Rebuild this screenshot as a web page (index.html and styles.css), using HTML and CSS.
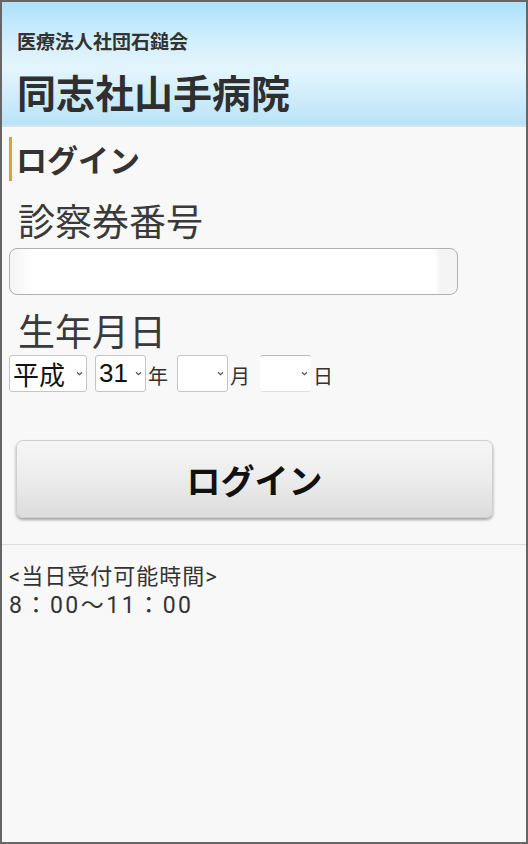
FILE: index.html
```html
<!DOCTYPE html>
<html lang="ja">
<head>
<meta charset="utf-8">
<title>同志社山手病院 ログイン</title>
<link rel="stylesheet" href="styles.css">
</head>
<body>
<div class="page">
  <header class="header">
    <div class="corp">医療法人社団石鎚会</div>
    <h1 class="hospital">同志社山手病院</h1>
  </header>

  <section class="form">
    <h2 class="heading">ログイン</h2>
    <div class="label">診察券番号</div>
    <div class="input-wrap"><input class="text-input" type="text"></div>
    <div class="label label-dob">生年月日</div>
    <div class="dob-row">
      <span class="sel sel-era"><span class="sel-text">平成</span><svg class="chev" viewBox="0 0 8 6" width="7" height="5"><path d="M1 1.5 L4 4.5 L7 1.5" fill="none" stroke="#555" stroke-width="1.4"/></svg></span>
      <span class="sel sel-year"><span class="sel-text">31</span><svg class="chev" viewBox="0 0 8 6" width="7" height="5"><path d="M1 1.5 L4 4.5 L7 1.5" fill="none" stroke="#555" stroke-width="1.4"/></svg></span>
      <span class="unit">年</span>
      <span class="sel sel-empty"><span class="sel-text"></span><svg class="chev" viewBox="0 0 8 6" width="7" height="5"><path d="M1 1.5 L4 4.5 L7 1.5" fill="none" stroke="#555" stroke-width="1.4"/></svg></span>
      <span class="unit">月</span>
      <span class="sel sel-empty sel-day"><span class="sel-text"></span><svg class="chev" viewBox="0 0 8 6" width="7" height="5"><path d="M1 1.5 L4 4.5 L7 1.5" fill="none" stroke="#555" stroke-width="1.4"/></svg></span>
      <span class="unit">日</span>
    </div>
    <button class="login-btn" type="button">ログイン</button>
  </section>

  <hr class="divider">

  <section class="info">
    <div class="info-line">&lt;当日受付可能時間&gt;</div>
    <div class="info-line info-time">8：00～11：00</div>
  </section>
</div>
</body>
</html>
```
FILE: styles.css
```css
html, body {
  margin: 0;
  padding: 0;
}
body {
  font-family: "Noto Sans CJK JP", "Noto Sans", sans-serif;
  color: #333;
  background: #666;
}
.page {
  width: 528px;
  height: 844px;
  box-sizing: border-box;
  border: 2px solid #666;
  background: #f8f8f8;
  overflow: hidden;
}
.header {
  height: 125px;
  box-sizing: border-box;
  padding: 29px 0 0 15px;
  background: linear-gradient(to bottom, #ade1fa 0%, #d6f0fc 35%, #e4f5fd 55%, #c5e8f9 88%, #b8e3f7 100%);
  border-bottom: 2px solid #d2e4ec;
}
.corp {
  font-size: 19px;
  line-height: 19px;
  font-weight: bold;
  color: #333;
}
.hospital {
  margin: 22px 0 0 0;
  font-size: 39px;
  line-height: 39px;
  font-weight: bold;
  color: #2f2f2f;
}
.form {
  padding: 0 7px;
}
.heading {
  margin: 10px 0 0 0;
  height: 44px;
  border-left: 3px solid #d9a33a;
  padding-left: 4px;
  font-size: 31px;
  line-height: 44px;
  font-weight: bold;
  color: #333;
}
.label {
  margin-top: 21px;
  padding-left: 9px;
  font-size: 37px;
  line-height: 36px;
  color: #3a3a3a;
}
.label-dob {
  margin-top: 17px;
}
.input-wrap {
  margin-top: 10px;
}
.text-input {
  display: block;
  width: 449px;
  height: 47px;
  box-sizing: border-box;
  border: 1px solid #b0b0b0;
  border-radius: 8px;
  background: linear-gradient(to right, #f4f4f4 0, #fff 24px, #fff 425px, #f4f4f4 430px);
  margin: 0;
  padding: 0 20px;
}
.dob-row {
  margin-top: 7px;
  display: flex;
  align-items: center;
  height: 37px;
}
.sel {
  position: relative;
  display: flex;
  align-items: center;
  height: 37px;
  box-sizing: border-box;
  border: 1px solid #c4c4c4;
  border-radius: 3px;
  background: #fff;
  padding: 0 3px 0 3px;
  font-family: "Liberation Sans", "Noto Sans CJK JP", sans-serif;
  font-size: 26px;
  color: #111;
}
.sel-era .sel-text {
  font-family: "Noto Sans CJK JP", sans-serif;
}
.sel-text {
  flex: 1;
}
.chev {
  flex: none;
}
.sel-era {
  width: 78px;
}
.sel-year {
  width: 51px;
  margin-left: 8px;
}
.sel-empty {
  width: 51px;
  margin-left: 9px;
}
.sel-day {
  border-top-color: #bbb;
  border-bottom-color: #ddd;
  border-left: none;
  border-right: none;
  margin-left: 10px;
}
.unit {
  font-size: 20px;
  line-height: 20px;
  margin-left: 2px;
  color: #333;
  padding-top: 4px;
}
.login-btn {
  display: block;
  margin: 48px 0 0 7px;
  width: 477px;
  height: 78px;
  border: 1px solid #cfcfcf;
  border-radius: 7px;
  background: linear-gradient(to bottom, #f6f6f6 0%, #ececec 50%, #dcdcdc 100%);
  box-shadow: 0 2px 3px rgba(0, 0, 0, 0.35);
  font-family: "Noto Sans CJK JP", sans-serif;
  font-size: 34px;
  font-weight: 600;
  color: #111;
  padding: 0;
}
.divider {
  margin: 26px 0 0 0;
  border: none;
  border-top: 1px solid #dcdcdc;
  height: 0;
}
.info {
  padding: 17px 7px 0;
}
.info-line {
  font-family: Roboto, "Noto Sans CJK JP", sans-serif;
  font-size: 22px;
  line-height: 29px;
  letter-spacing: 1px;
  color: #333;
}
.info-time {
  font-size: 23px;
  letter-spacing: 2.5px;
}
```
